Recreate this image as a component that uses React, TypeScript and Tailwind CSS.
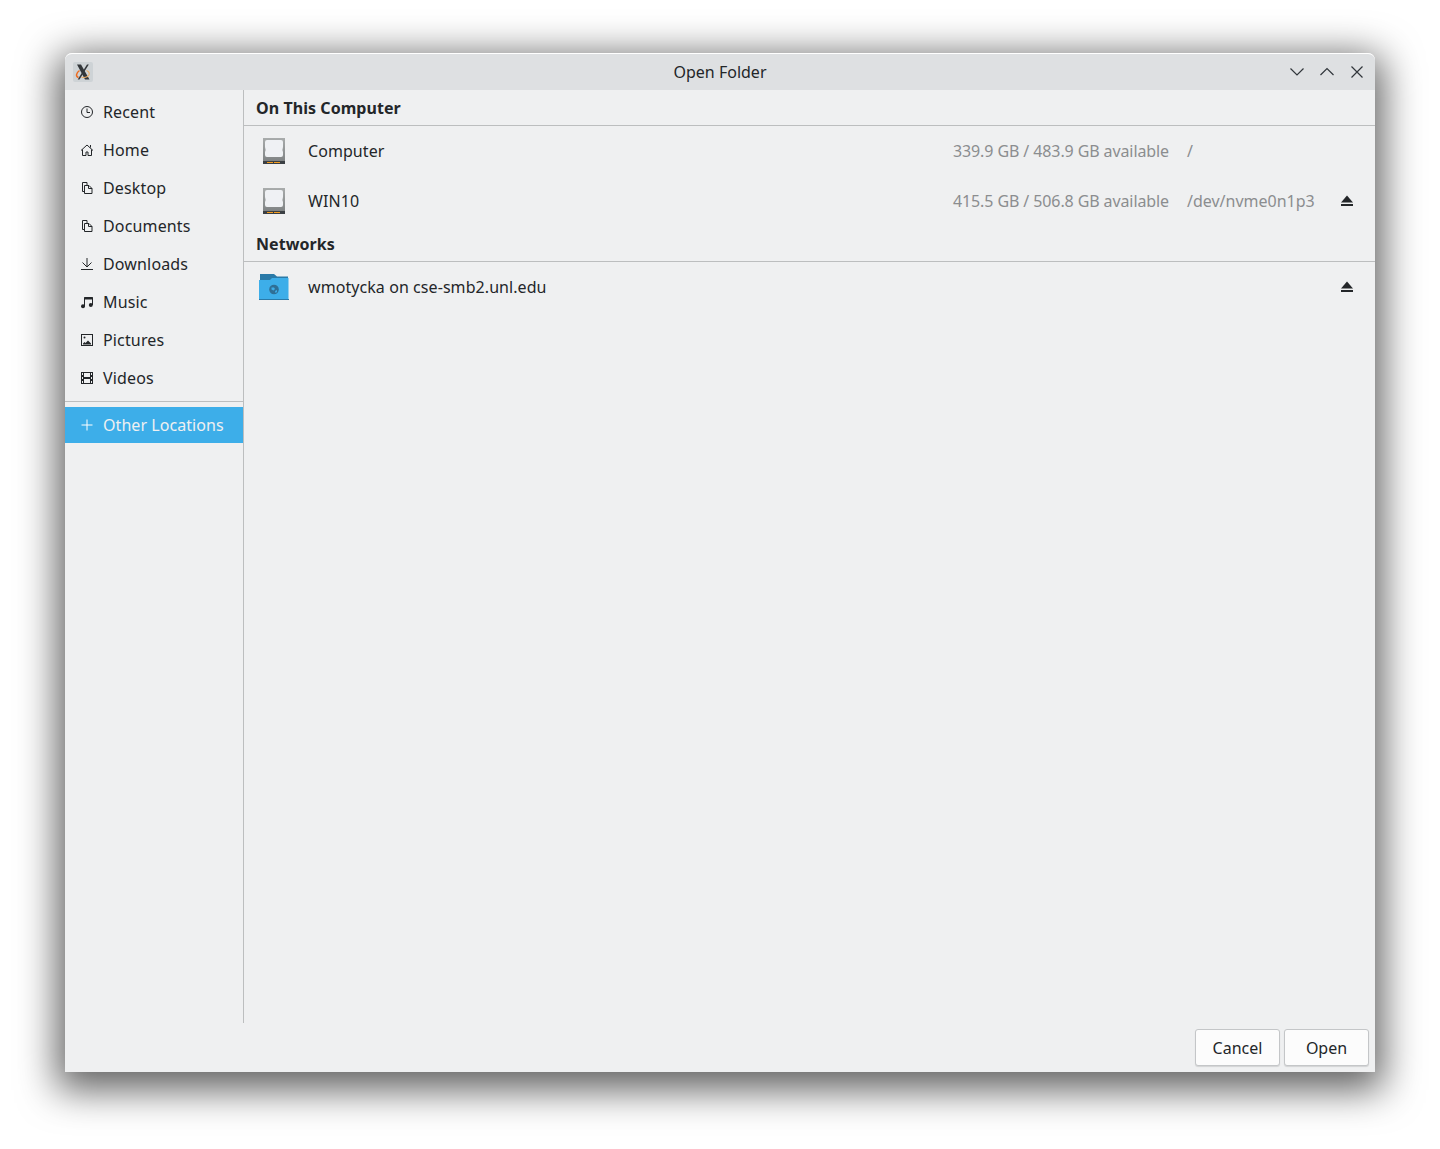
const font = { fontFamily: '"Noto Sans", sans-serif' };

function Clock() {
  return (
    <svg width="14" height="14" viewBox="0 0 14 14" fill="none" stroke="#232629" strokeWidth="1">
      <circle cx="7" cy="7" r="5.5" />
      <path d="M7 3.500V7.500H10" />
    </svg>
  );
}

function HomeIcon() {
  return (
    <svg width="14" height="14" viewBox="0 0 14 14" fill="none" stroke="#232629" strokeWidth="1">
      <path d="M1 7.500 7 2l6 5.500M2.500 6.500V12.500h3.500V9h2v3.500h3.500V6.500M10.500 2v2.500" />
    </svg>
  );
}

function Docs() {
  return (
    <svg width="14" height="14" viewBox="0 0 14 14" fill="none" stroke="#232629" strokeWidth="1">
      <path d="M4.500 10.500H2.500V1.500H7V4" />
      <path d="M4.500 4.500H9l3 3v5H4.500z" />
      <path d="M8.500 4.500V7.500H12" />
    </svg>
  );
}

function DownloadIcon() {
  return (
    <svg width="14" height="14" viewBox="0 0 14 14" fill="none" stroke="#232629" strokeWidth="1">
      <path d="M7 1v8M2.500 5.500 7 10l4.500-4.500M1 12.500h12" />
    </svg>
  );
}

function MusicIcon() {
  return (
    <svg width="14" height="14" viewBox="0 0 14 14" fill="none">
      <path d="M4.500 11V2.500h8V10" stroke="#232629" />
      <path d="M4.500 2h8v2.500h-8z" fill="#232629" />
      <circle cx="3" cy="11.200" r="2" fill="#232629" />
      <circle cx="10.800" cy="10" r="2" fill="#232629" />
    </svg>
  );
}

function PictureIcon() {
  return (
    <svg width="14" height="14" viewBox="0 0 14 14" fill="none">
      <rect x="1.500" y="1.500" width="11" height="11" stroke="#232629" />
      <circle cx="4.500" cy="4.500" r="1" fill="#232629" />
      <path d="M3 11.500v-1l1.500-1.500 1 1 2.500-2.500 3 3v1z" fill="#232629" />
    </svg>
  );
}

function FilmIcon() {
  return (
    <svg width="14" height="14" viewBox="0 0 14 14">
      <path
        fillRule="evenodd"
        fill="#232629"
        d="M1 1h12v12H1zM2 2v2h1V2zm9 0v2h1V2zM4 2v4h6V2zM2 6v2h1V6zm9 0v2h1V6zM4 8v4h6V8zM2 10v2h1v-2zm9 0v2h1v-2z"
      />
    </svg>
  );
}

function PlusIcon() {
  return (
    <svg width="14" height="14" viewBox="0 0 14 14" fill="none" stroke="#ffffff" strokeWidth="1">
      <path d="M7 1.500V12.500M1.500 7H12.500" />
    </svg>
  );
}

function DriveIcon() {
  return (
    <svg width="22" height="26" viewBox="0 0 22 26">
      <defs>
        <linearGradient id="driveBody" x1="0" y1="0" x2="0" y2="1">
          <stop offset="0" stopColor="#a9acac" />
          <stop offset="1" stopColor="#7a7e7f" />
        </linearGradient>
      </defs>
      <rect x="0" y="0" width="22" height="26" fill="url(#driveBody)" />
      <path
        d="M4 2h14q2 0 2 2v5q-1 2.500 0 5v3q0 2-2 2H4q-2 0-2-2v-3q1-2.500 0-5V4q0-2 2-2z"
        fill="#eff1f4"
      />
      <rect x="0" y="23" width="22" height="3" fill="#3a3f43" />
      <rect x="4" y="24" width="6" height="1" fill="#f39c1f" />
      <rect x="11" y="24" width="6" height="1" fill="#f39c1f" />
    </svg>
  );
}

function NetFolderIcon() {
  return (
    <svg width="30" height="26" viewBox="0 0 30 26">
      <path d="M1 0h14l3 2.500h11V8H1z" fill="#2a7aa8" />
      <path d="M0 6h11l2-2h16.500v21.500H0z" fill="#3daee9" />
      <rect x="0" y="25" width="30" height="1" fill="#2a7aa8" />
      <circle cx="15" cy="15.500" r="4.800" fill="#2f6f96" />
      <path d="M12.500 13.500h2.500l1 1.500-1.500 1.500-2-1zM16 17l2-1v2l-1.500 1z" fill="#3daee9" />
    </svg>
  );
}

function EjectIcon() {
  return (
    <svg width="12" height="12" viewBox="0 0 12 12" fill="#232629">
      <path d="M6 0.500 12 7.500H0z" />
      <rect x="0" y="9" width="12" height="2" />
    </svg>
  );
}

function XLogo() {
  return (
    <div className="flex h-5 w-5 items-center justify-center rounded-[2px] bg-[#ced3d6]">
      <svg width="18" height="18" viewBox="0 0 18 18" fill="none">
        <path d="M3 1.500h4l8.500 15h-4.500z" fill="#33373a" />
        <path d="M13 1.500h1.800L5.500 16.500H3.700z" fill="#33373a" />
        <path d="M5.500 7.500C2 10 1.500 13.500 4.500 14.500" stroke="#ee6a1d" strokeWidth="1.500" />
        <path d="M12.500 7.500c3 1 4 4 1 6-1.500.8-4 1.200-6 .8" stroke="#eeb06a" strokeWidth="1.200" />
      </svg>
    </div>
  );
}

const places = [
  { label: "Recent", icon: <Clock /> },
  { label: "Home", icon: <HomeIcon /> },
  { label: "Desktop", icon: <Docs /> },
  { label: "Documents", icon: <Docs /> },
  { label: "Downloads", icon: <DownloadIcon /> },
  { label: "Music", icon: <MusicIcon /> },
  { label: "Pictures", icon: <PictureIcon /> },
  { label: "Videos", icon: <FilmIcon /> },
];

function SectionHeader({ title }: { title: string }) {
  return (
    <div className="flex h-[36px] items-center border-b border-[#bcbebf] pl-3 text-[16px] font-bold tracking-[0.06px] text-[#232629]">
      {title}
    </div>
  );
}

function LocationRow({
  icon,
  iconWidth,
  name,
  space,
  path,
  eject,
}: {
  icon: React.ReactNode;
  iconWidth: string;
  name: string;
  space?: string;
  path?: string;
  eject?: boolean;
}) {
  return (
    <div className="flex h-[50px] items-center text-[16px]">
      <div className={`flex shrink-0 ${iconWidth}`}>{icon}</div>
      <div className="flex-1 tracking-[0.07px] text-[#232629]">{name}</div>
      {space && <div className="tracking-[-0.1px] text-[#8b8d8f]">{space}</div>}
      <div className="ml-[18px] w-[148px] text-[#8b8d8f]">{path}</div>
      <div className="flex w-[40px] justify-start pl-[6px]">{eject && <EjectIcon />}</div>
    </div>
  );
}

export default function App() {
  return (
    <div className="h-[1149px] w-[1440px] overflow-hidden bg-white pl-[65px] pt-[53px]" style={font}>
      <div className="flex h-[1019px] w-[1310px] flex-col rounded-t-[7px] bg-[#eff0f1] shadow-[0_10px_38px_8px_rgba(0,0,0,0.62)]">
        {/* Title bar */}
        <div className="relative flex h-[37px] shrink-0 items-center justify-between rounded-t-[7px] border-t border-white bg-[#dee0e2] pl-2 pr-[11px]">
          <XLogo />
          <div className="absolute inset-x-0 text-center text-[16px] text-[#232629]">Open Folder</div>
          <div className="flex items-center gap-[16px]">
            <svg width="14" height="14" viewBox="0 0 14 14" fill="none" stroke="#31363b" strokeWidth="1.200">
              <path d="M0.500 3.500 7 10l6.500-6.500" />
            </svg>
            <svg width="14" height="14" viewBox="0 0 14 14" fill="none" stroke="#31363b" strokeWidth="1.200">
              <path d="M0.500 10 7 3.500l6.500 6.500" />
            </svg>
            <svg width="14" height="14" viewBox="0 0 14 14" fill="none" stroke="#31363b" strokeWidth="1.200">
              <path d="M1.500 1.500l11 11M12.500 1.500l-11 11" />
            </svg>
          </div>
        </div>

        <div className="flex min-h-0 flex-1">
          {/* Sidebar */}
          <div className="w-[179px] shrink-0 border-r border-[#bcbebf] pt-[3px] text-[16px] text-[#232629]">
            {places.map((place) => (
              <div key={place.label} className="flex h-[38px] items-center gap-[9px] pl-[15px]">
                <span className="flex w-[14px] justify-center">{place.icon}</span>
                <span className="tracking-[0.15px]">{place.label}</span>
              </div>
            ))}
            <div className="mb-[5px] mt-[4px] border-t border-[#bcbebf]" />
            <div className="flex h-[36px] items-center gap-[9px] bg-[#3daee9] pl-[15px] text-[#eff0f1]">
              <span className="flex w-[14px] justify-center">
                <PlusIcon />
              </span>
              <span className="tracking-[0.06px]">Other Locations</span>
            </div>
          </div>

          {/* Locations */}
          <div className="min-w-0 flex-1">
            <SectionHeader title="On This Computer" />
            <LocationRow icon={<DriveIcon />} iconWidth="w-[64px] pl-[19px]" name="Computer" space="339.9 GB / 483.9 GB available" path="/" />
            <LocationRow icon={<DriveIcon />} iconWidth="w-[64px] pl-[19px]" name="WIN10" space="415.5 GB / 506.8 GB available" path="/dev/nvme0n1p3" eject />
            <SectionHeader title="Networks" />
            <LocationRow icon={<NetFolderIcon />} iconWidth="w-[64px] pl-[15px]" name="wmotycka on cse-smb2.unl.edu" eject />
          </div>
        </div>

        {/* Actions */}
        <div className="flex h-[49px] shrink-0 items-start justify-end gap-[4px] pr-[6px] pt-[6px]">
          <button className="h-[37px] w-[85px] rounded-[3px] border border-[#c4c6c8] bg-[#fcfcfc] text-[16px] text-[#232629] shadow-[0_1px_1px_rgba(0,0,0,0.12)]">
            Cancel
          </button>
          <button className="h-[37px] w-[85px] rounded-[3px] border border-[#c4c6c8] bg-[#fcfcfc] text-[16px] text-[#232629] shadow-[0_1px_1px_rgba(0,0,0,0.12)]">
            Open
          </button>
        </div>
      </div>
    </div>
  );
}
